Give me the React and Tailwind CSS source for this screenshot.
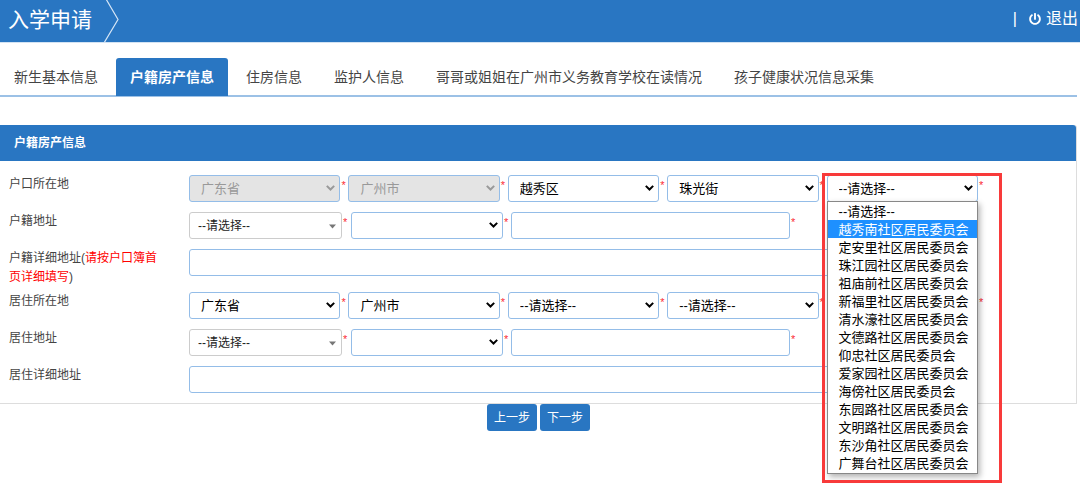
import React, { useState } from 'react';
import { FaPowerOff } from 'react-icons/fa';

const TABS = [
  '新生基本信息',
  '户籍房产信息',
  '住房信息',
  '监护人信息',
  '哥哥或姐姐在广州市义务教育学校在读情况',
  '孩子健康状况信息采集',
];

const COMMUNITIES = [
  '--请选择--',
  '越秀南社区居民委员会',
  '定安里社区居民委员会',
  '珠江园社区居民委员会',
  '祖庙前社区居民委员会',
  '新福里社区居民委员会',
  '清水濠社区居民委员会',
  '文德路社区居民委员会',
  '仰忠社区居民委员会',
  '爱家园社区居民委员会',
  '海傍社区居民委员会',
  '东园路社区居民委员会',
  '文明路社区居民委员会',
  '东沙角社区居民委员会',
  '广舞台社区居民委员会',
];

const Star = () => <span className="w-2 shrink-0 pl-px pt-px text-[11px] leading-[19px] text-red-500">*</span>;

const Row = ({ id, label, children }) => (
  <div className="flex items-start">
    <div className="w-[189px] shrink-0 pl-[9px] pr-[25px] pb-[5px]">
      <label htmlFor={id} className="block text-[12px] leading-[19px] text-[#444]">
        {label}
      </label>
    </div>
    <div className="mr-[90px] mb-[10px] min-w-0 flex-1">{children}</div>
  </div>
);

const Select = ({ id, name, value = '', disabled }) => (
  <div className="relative h-[27px] min-w-0 flex-1">
    <select
      id={id}
      aria-label={name}
      disabled={disabled}
      className="peer h-full w-full appearance-none rounded-[3px] border border-[#94bde8] bg-white px-[11px] text-[13px] text-black disabled:bg-[#e4e4e4] disabled:text-[#999] disabled:opacity-100"
    >
      <option>{value}</option>
    </select>
    <svg
      className="pointer-events-none absolute right-[5px] top-[10px] text-black peer-disabled:text-[#999]"
      width="9"
      height="6"
      viewBox="0 0 9 6"
      fill="none"
    >
      <path d="M0.8 0.9L4.5 4.5L8.2 0.9" stroke="currentColor" strokeWidth="2" />
    </svg>
  </div>
);

// searchable style select with the small grey caret
const ChosenSelect = ({ id, name }) => (
  <div className="relative h-[27px] w-[153px]">
    <select
      id={id}
      aria-label={name}
      className="h-full w-full appearance-none rounded-[3px] border border-[#ccc] bg-white pl-2 text-[12px] text-[#222]"
    >
      <option>--请选择--</option>
    </select>
    <svg className="pointer-events-none absolute right-[6px] top-3" width="7" height="5" viewBox="0 0 7 5">
      <path d="M0 0.5h7L3.5 4.5z" fill="#777" />
    </svg>
  </div>
);

const TextBox = ({ id, name }) => (
  <input
    id={id}
    type="text"
    aria-label={name}
    className="h-[27px] w-full min-w-0 rounded-[3px] border border-[#94bde8] bg-white px-2 text-[13px]"
  />
);

const Cell = ({ children }) => <div className="relative flex items-start">{children}</div>;

const AddressFields = ({ id, prefix }) => (
  <div className="flex">
    <div className="flex w-[162px] shrink-0">
      <ChosenSelect id={id} name={prefix} />
      <Star />
    </div>
    <div className="flex w-[160px] shrink-0">
      <Select name={`${prefix}路段`} />
      <Star />
    </div>
    <div className="flex w-[287px]">
      <TextBox name={`${prefix}门牌`} />
      <Star />
    </div>
  </div>
);

const CommunityMenu = ({ active, onPick }) => (
  <ul
    role="listbox"
    aria-label="社区"
    className="absolute left-0 right-2 top-[26px] z-10 border border-[#888] bg-white pb-px shadow-[2px_3px_6px_rgba(0,0,0,0.3)]"
  >
    {COMMUNITIES.map((name, i) => (
      <li
        key={name}
        role="option"
        aria-selected={i === active}
        onMouseEnter={() => onPick(i)}
        className={`h-[18px] cursor-default whitespace-nowrap pl-[11px] text-[13px] leading-[20px] ${
          i === active ? 'bg-[#1e90ff] text-white' : 'text-black'
        }`}
      >
        {name}
      </li>
    ))}
  </ul>
);

const App = () => {
  const [tab, setTab] = useState(1);
  const [active, setActive] = useState(1);

  return (
    <div className="min-h-screen bg-white font-['Liberation_Sans','Noto_Sans_CJK_SC',sans-serif]">
      <header className="flex h-[43px] items-center justify-between border-b border-[#d3e3f3] bg-[#2976c2] pr-[2px] text-white">
        <div className="flex h-full items-center">
          <h1 className="pb-1 pl-2 text-[21px] leading-none">入学申请</h1>
          <svg className="ml-3 h-full" width="16" height="42" viewBox="0 0 16 42" fill="none">
            <path d="M2 -1L14 19.5L0 43" stroke="#d6e6f6" strokeWidth="1.2" />
          </svg>
        </div>
        <div className="flex items-center pb-1 text-[16px] leading-none">
          <span className="mr-3">|</span>
          <a href="#logout" className="flex items-center gap-[5px]">
            <FaPowerOff className="size-3" />
            退出
          </a>
        </div>
      </header>

      <div className="mr-[3px]">
        <nav className="mt-[15px] flex gap-1 border-b-2 border-[#9cc1e6]">
          {TABS.map((name, i) => (
            <button
              key={name}
              type="button"
              onClick={() => setTab(i)}
              className={`-mb-px h-[38px] shrink-0 rounded-t-[3px] px-[14px] text-[14px] ${
                i === tab ? 'bg-[#2976c2] font-bold text-white' : 'text-[#444]'
              }`}
            >
              {name}
            </button>
          ))}
        </nav>

        <form onSubmit={(e) => e.preventDefault()}>
          <section className="mt-7 rounded-t-[3px] border-r border-b border-[#ddd]">
            <h2 className="h-9 rounded-tr-[3px] bg-[#2976c2] pl-[14px] text-[12px] font-bold leading-9 text-white">户籍房产信息</h2>
            <div className="pt-[14px]">
              <Row id="hukou" label="户口所在地">
                <div className="grid grid-cols-5">
                  <Cell>
                    <Select id="hukou" value="广东省" disabled />
                    <Star />
                  </Cell>
                  <Cell>
                    <Select name="户口市" value="广州市" disabled />
                    <Star />
                  </Cell>
                  <Cell>
                    <Select name="户口区" value="越秀区" />
                    <Star />
                  </Cell>
                  <Cell>
                    <Select name="户口街道" value="珠光街" />
                    <Star />
                  </Cell>
                  <Cell>
                    <Select name="户口社区" value="--请选择--" />
                    <Star />
                    <CommunityMenu active={active} onPick={setActive} />
                    <div className="pointer-events-none absolute -left-[5px] -right-4 -top-[2px] z-20 h-[310px] border-3 border-[#f83a3a]"></div>
                  </Cell>
                </div>
              </Row>
              <Row id="hukou-addr" label="户籍地址">
                <AddressFields id="hukou-addr" prefix="户籍地址" />
              </Row>
              <Row
                id="hukou-detail"
                label={
                  <>
                    户籍详细地址(<span className="text-[#ff0000]">请按户口簿首</span>
                    <wbr />
                    <span className="text-[#ff0000]">页详细填写</span>)
                  </>
                }
              >
                <div className="pr-9">
                  <TextBox id="hukou-detail" />
                </div>
              </Row>
              <Row id="live" label="居住所在地">
                <div className="grid grid-cols-5">
                  {['广东省', '广州市', '--请选择--', '--请选择--', '--请选择--'].map((value, i) => (
                    <Cell key={i}>
                      <Select id={i === 0 ? 'live' : undefined} name={`居住所在地${i + 1}`} value={value} />
                      <Star />
                    </Cell>
                  ))}
                </div>
              </Row>
              <Row id="live-addr" label="居住地址">
                <AddressFields id="live-addr" prefix="居住地址" />
              </Row>
              <Row id="live-detail" label="居住详细地址">
                <div className="pr-9">
                  <TextBox id="live-detail" />
                </div>
              </Row>
            </div>
          </section>

          <div className="flex justify-center gap-[3px]">
            <button type="button" className="h-[27px] rounded-[3px] bg-[#2976c2] px-[7px] text-[12px] text-white">
              上一步
            </button>
            <button type="submit" className="h-[27px] rounded-[3px] bg-[#2976c2] px-[7px] text-[12px] text-white">
              下一步
            </button>
          </div>
        </form>
      </div>
    </div>
  );
};

export default App;
